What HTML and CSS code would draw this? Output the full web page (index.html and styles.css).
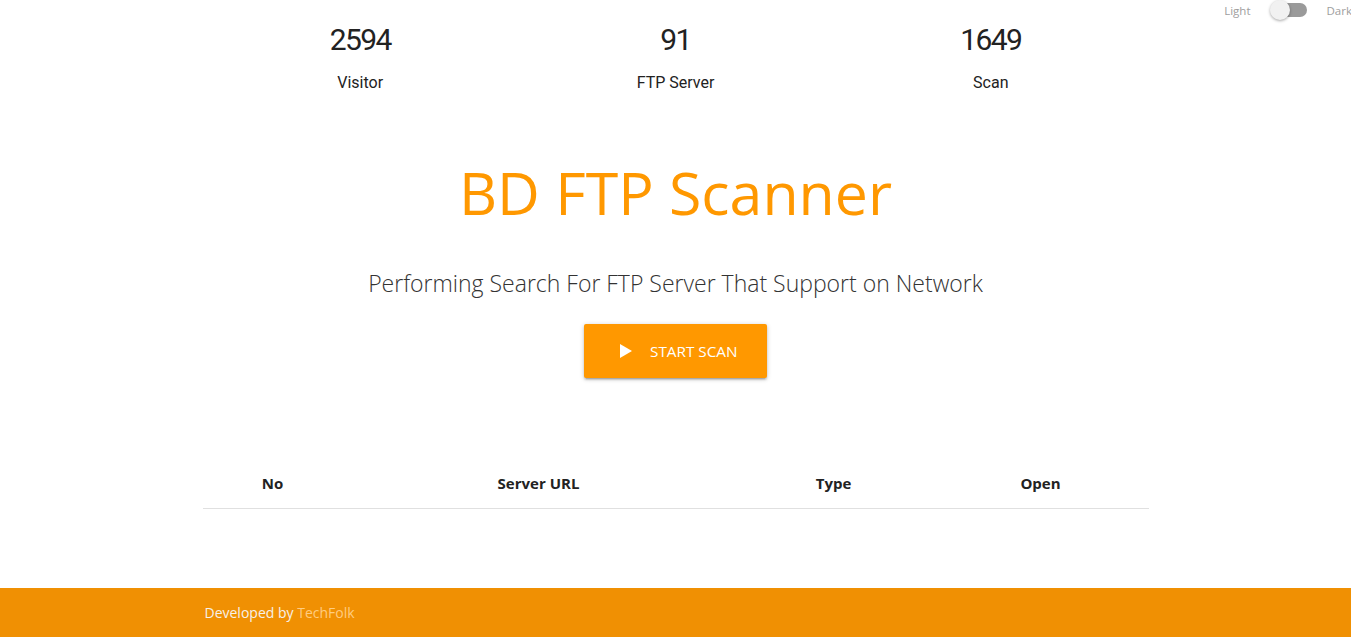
FILE: index.html
```html
<!DOCTYPE html>
<html>
<head>
<meta charset="utf-8">
<title>BD FTP Scanner</title>
<link rel="stylesheet" href="styles.css">
</head>
<body>
<div class="page">
  <div class="topbar">
    <label class="switch">
      <span class="sw-label">Light</span>
      <span class="lever"><span class="knob"></span></span>
      <span class="sw-label">Dark</span>
    </label>
  </div>
  <main class="container">
    <section class="stats">
      <div class="stat"><div class="num">2594</div><div class="lbl">Visitor</div></div>
      <div class="stat"><div class="num">91</div><div class="lbl">FTP Server</div></div>
      <div class="stat"><div class="num">1649</div><div class="lbl">Scan</div></div>
    </section>
    <h1 class="title">BD FTP Scanner</h1>
    <p class="subtitle">Performing Search For FTP Server That Support on Network</p>
    <div class="btn-row">
      <button class="btn"><svg class="play" viewBox="0 0 12 14" width="12" height="14"><path d="M0 0 L12 7 L0 14 Z" fill="#fff"/></svg><span>START SCAN</span></button>
    </div>
    <table class="results">
      <thead>
        <tr><th class="c1">No</th><th class="c2">Server URL</th><th class="c3">Type</th><th class="c4">Open</th></tr>
      </thead>
      <tbody></tbody>
    </table>
  </main>
  <footer class="footer">
    <div class="container foot-inner">Developed by <span class="brand">TechFolk</span></div>
  </footer>
</div>
</body>
</html>
```
FILE: styles.css
```css
html, body {
  margin: 0;
  padding: 0;
  background: #fff;
}
body {
  font-family: "Open Sans", "Noto Sans", sans-serif;
  color: #222;
  height: 637px;
  overflow: hidden;
}
.page {
  width: 1351px;
  height: 637px;
  overflow: hidden;
  display: flex;
  flex-direction: column;
}
.topbar {
  height: 20px;
  display: flex;
  justify-content: flex-end;
  margin-right: -1px;
}
.switch {
  display: flex;
  align-items: center;
  height: 20px;
  font-family: "Open Sans", sans-serif;
  font-size: 11.5px;
  color: #9e9e9e;
}
.lever {
  position: relative;
  width: 36px;
  height: 14px;
  margin: 0 20px;
  border-radius: 7px;
  background: #9a9a9a;
}
.knob {
  position: absolute;
  left: -1px;
  top: -3px;
  width: 20px;
  height: 20px;
  border-radius: 50%;
  background: #f1f1f1;
  box-shadow: 0 1px 3px rgba(0,0,0,0.35);
}
.container {
  width: 946px;
  margin: 0 auto;
}
.stats {
  display: grid;
  grid-template-columns: repeat(3, 1fr);
  margin-top: 2px;
}
.stat {
  text-align: center;
  font-family: Roboto, sans-serif;
  color: #222;
}
.num {
  font-size: 30px;
  line-height: 36px;
  font-weight: 400;
  letter-spacing: -1.6px;
}
.lbl {
  margin-top: 13px;
  font-size: 16px;
  line-height: 24px;
}
.title {
  margin: 55px 0 0;
  text-align: center;
  font-weight: 400;
  font-size: 59px;
  line-height: 84px;
  color: #ff9800;
}
.subtitle {
  margin: 33px 0 0;
  text-align: center;
  font-weight: 300;
  font-size: 23px;
  line-height: 32px;
  color: #333;
}
.btn-row {
  display: flex;
  justify-content: center;
  margin-top: 25px;
}
.btn {
  display: flex;
  align-items: center;
  gap: 18px;
  width: 183px;
  height: 54px;
  padding: 0 0 0 36px;
  border: none;
  border-radius: 2px;
  background: #ff9800;
  color: #fff;
  font-family: "Open Sans", sans-serif;
  font-size: 15.3px;
  box-shadow: 0 2px 2px rgba(0,0,0,0.14), 0 3px 1px -2px rgba(0,0,0,0.12), 0 1px 5px rgba(0,0,0,0.2);
}
.results {
  width: 100%;
  margin-top: 80px;
  border-collapse: collapse;
}
.results th {
  text-align: center;
  font-size: 15px;
  font-weight: 700;
  color: #222;
  padding: 15px 0;
  line-height: 20px;
  border-bottom: 1px solid #e0e0e0;
}
.c1 { width: 140px; }
.c2 { width: 392px; }
.c3 { width: 198px; }
.c4 { width: 216px; }
.footer {
  margin-top: auto;
  height: 49px;
  background: #f09003;
  display: flex;
  align-items: center;
}
.foot-inner {
  font-size: 14px;
  color: #f6f1ea;
  padding-left: 2px;
  box-sizing: border-box;
}
.brand {
  color: #ffcc80;
}
```
